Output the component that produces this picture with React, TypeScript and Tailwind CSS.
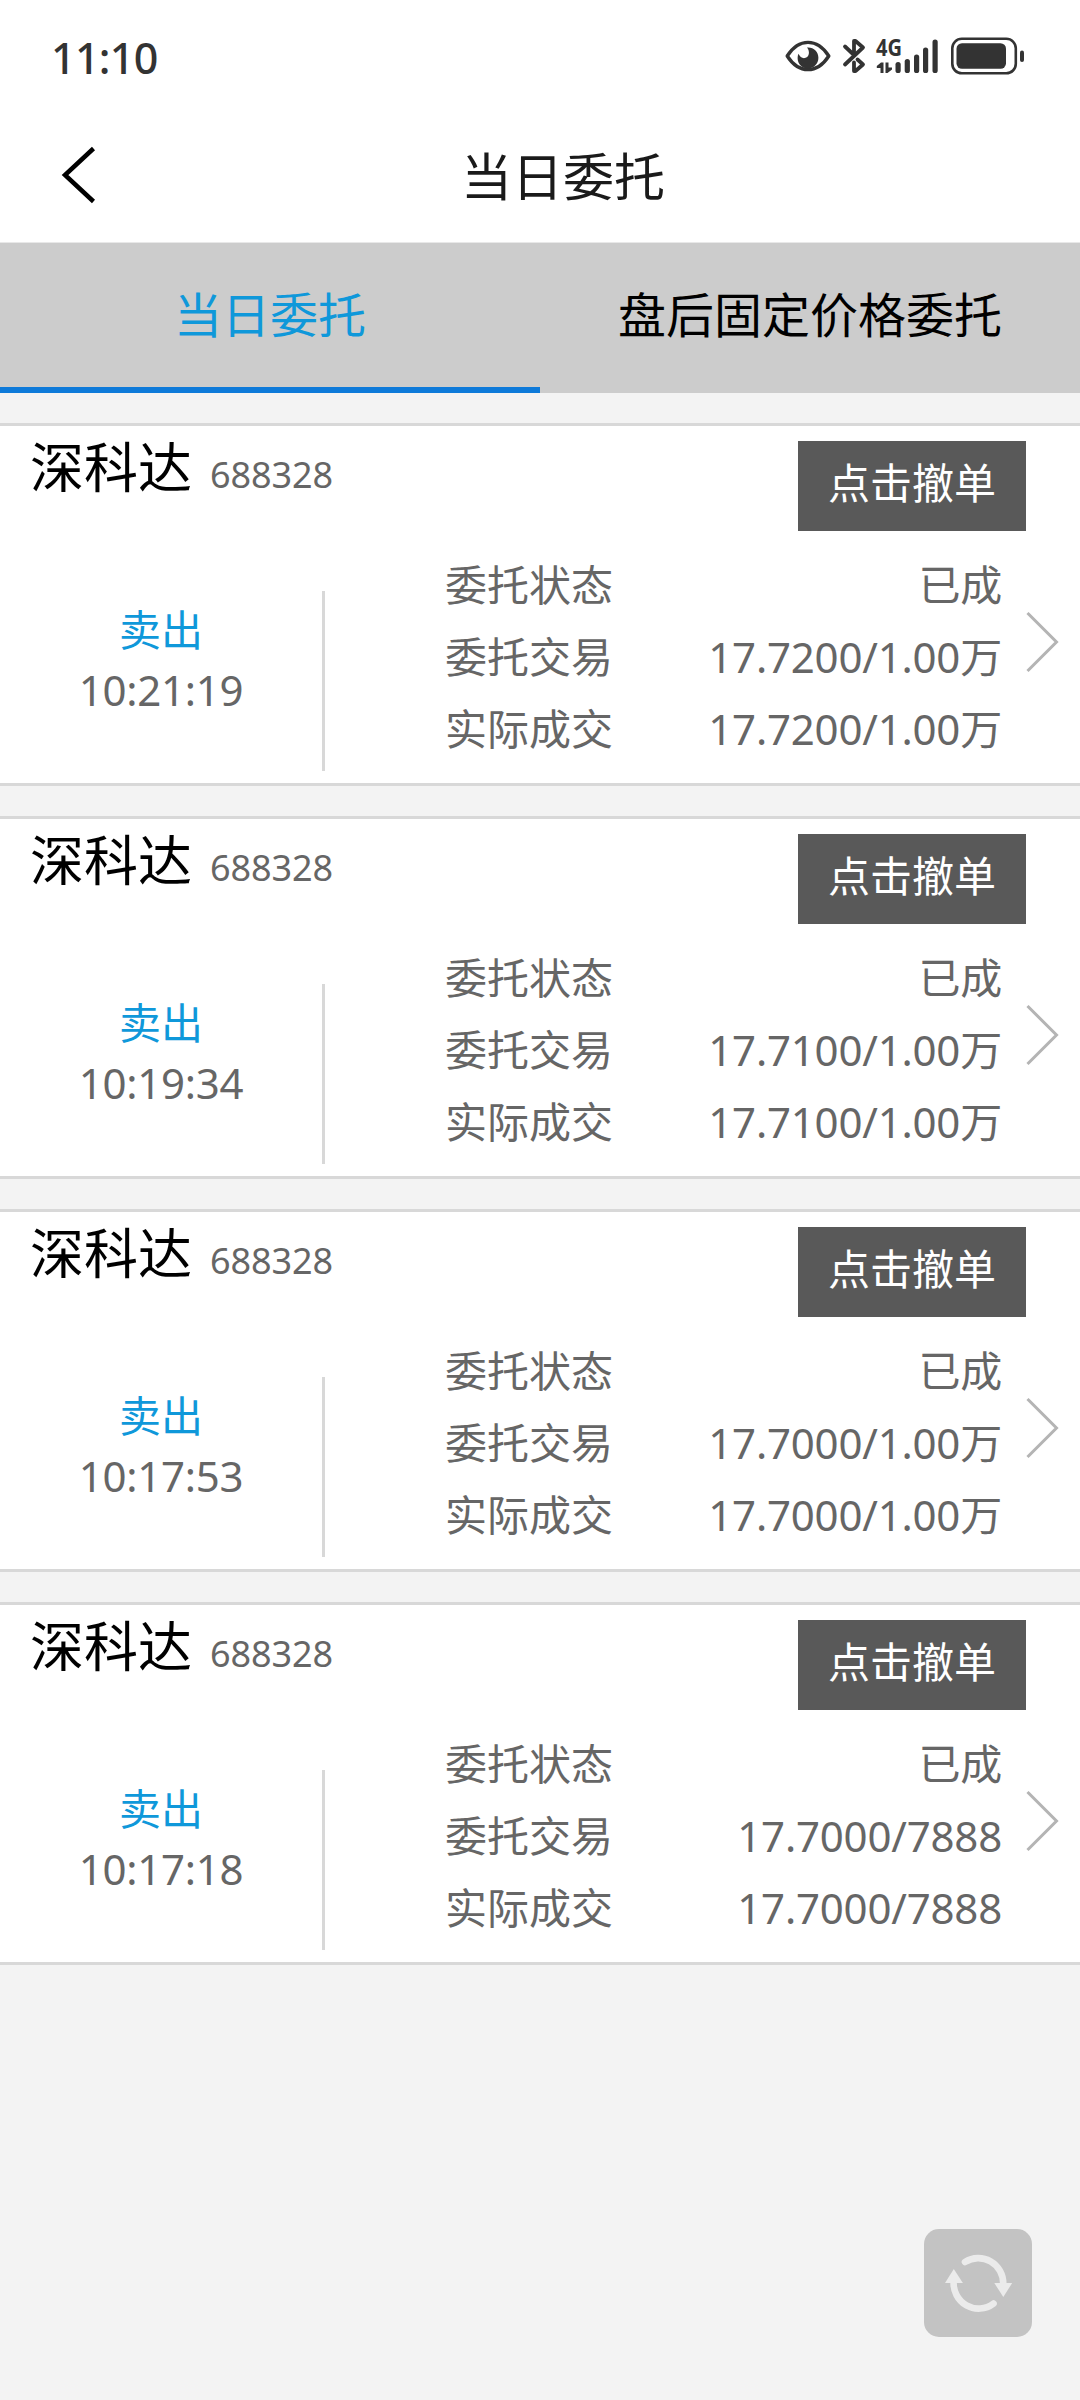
import React, { useState } from "react";

interface Order {
  name: string;
  code: string;
  side: string;
  time: string;
  status: string;
  entrust: string;
  deal: string;
}

const orders: Order[] = [
  {
    name: "深科达",
    code: "688328",
    side: "卖出",
    time: "10:21:19",
    status: "已成",
    entrust: "17.7200/1.00万",
    deal: "17.7200/1.00万",
  },
  {
    name: "深科达",
    code: "688328",
    side: "卖出",
    time: "10:19:34",
    status: "已成",
    entrust: "17.7100/1.00万",
    deal: "17.7100/1.00万",
  },
  {
    name: "深科达",
    code: "688328",
    side: "卖出",
    time: "10:17:53",
    status: "已成",
    entrust: "17.7000/1.00万",
    deal: "17.7000/1.00万",
  },
  {
    name: "深科达",
    code: "688328",
    side: "卖出",
    time: "10:17:18",
    status: "已成",
    entrust: "17.7000/7888",
    deal: "17.7000/7888",
  },
];

const tabs = ["当日委托", "盘后固定价格委托"];

function EyeIcon() {
  return (
    <svg width="46" height="32" viewBox="0 0 46 32" fill="none">
      <path
        d="M2.200 16C8 7 15 2.400 23 2.400S38 7 43.800 16C38 25 31 29.600 23 29.600S8 25 2.200 16Z"
        stroke="#333"
        strokeWidth="3.400"
        strokeLinejoin="round"
      />
      <path
        d="M22 7.600c6.600-.6 11.400 4.200 11.400 10.200 0 6-4.600 10.700-10.400 10.700S12.600 24 12.600 18c0-1.500.3-3 .9-4.200 1.300 3 3.600 4.700 6.300 4.300 4.400-.7 5.600-6.500 2.200-10.500Z"
        fill="#333"
      />
    </svg>
  );
}

function BluetoothIcon() {
  return (
    <svg
      width="24"
      height="36"
      viewBox="0 0 24 36"
      fill="none"
      stroke="#333"
      strokeWidth="3.800"
      strokeLinecap="round"
      strokeLinejoin="round"
    >
      <path d="M3 8.500L12 17V3h1.500L21 9.500 3 26.500" />
      <path d="M15.500 21.500L21 26.500 13.500 33H12v-8.500" />
    </svg>
  );
}

function SignalIcon() {
  return (
    <svg
      className="overflow-visible"
      width="64"
      height="36"
      viewBox="0 0 64 36"
      fill="#333"
    >
      <text
        x="0"
        y="18"
        fontSize="23"
        fontWeight="700"
        fontFamily="Noto Sans, sans-serif"
        textLength="26"
        lengthAdjust="spacingAndGlyphs"
      >
        4G
      </text>
      <path d="M7.500 24.500V35H4.500v-5H.8v-2L5 24.500zM9.500 24.500h3v5H16v2L11.500 35h-2z" />
      <rect x="19.500" y="24" width="5.200" height="11" rx="2.600" />
      <rect x="28.700" y="21" width="5.200" height="14" rx="2.600" />
      <rect x="38" y="16.500" width="5.200" height="18.500" rx="2.600" />
      <rect x="47" y="9.500" width="5.200" height="25.500" rx="2.600" />
      <rect x="56.500" y="1.500" width="5.200" height="33.500" rx="2.600" />
    </svg>
  );
}

function BatteryIcon() {
  return (
    <svg width="74" height="38" viewBox="0 0 74 38" fill="none">
      <rect
        x="1.300"
        y="1.800"
        width="63.500"
        height="34.500"
        rx="9.500"
        stroke="#333"
        strokeWidth="2.600"
      />
      <rect x="5.500" y="6.200" width="49.500" height="25.600" rx="5.500" fill="#333" />
      <rect x="69" y="13.500" width="4" height="11.500" rx="2" fill="#333" />
    </svg>
  );
}

function RefreshIcon() {
  return (
    <svg width="108" height="108" viewBox="0 0 108 108" fill="none">
      <g stroke="#ebebeb" strokeWidth="6.600" strokeLinecap="round">
        <path d="M41 33A25 25.500 0 0 1 79.300 55" />
        <path d="M69.500 74.600A25 25.500 0 0 1 29.700 52" />
      </g>
      <path d="M70.300 54h17.900l-8.900 14z" fill="#ebebeb" />
      <path d="M21 54h17.900L29.800 40z" fill="#ebebeb" />
    </svg>
  );
}

function OrderCard({ order }: { order: Order }) {
  const rows = [
    { label: "委托状态", value: order.status },
    { label: "委托交易", value: order.entrust },
    { label: "实际成交", value: order.deal },
  ];

  return (
    <div className="h-[363px] border-y-[3px] border-[#d8d8d8] bg-white">
      <div className="flex h-[123px] items-start justify-between pl-[30px] pr-[54px]">
        <div className="flex items-baseline gap-[18px] pt-px">
          <span className="text-[54px] leading-[80px] text-black">
            {order.name}
          </span>
          <span className="text-[36px] leading-[80px] tracking-[-0.1px] text-[#666]">
            {order.code}
          </span>
        </div>
        <button className="mt-[15px] h-[90px] w-[228px] bg-[#595959] pb-[6px] text-[42px] leading-[84px] text-white">
          点击撤单
        </button>
      </div>

      <div className="flex h-[234px]">
        <div className="mt-[42px] flex h-[180px] w-[325px] flex-col items-center border-r-[3px] border-[#d8d8d8] pt-[9px] text-[42px] leading-[60px]">
          <span className="text-[#0f98da]">{order.side}</span>
          <span className="tracking-[-0.3px] text-[#666]">{order.time}</span>
        </div>
        <div className="flex w-[677px] flex-col pl-[120px] text-[42px] leading-[72px] text-[#666]">
          {rows.map((row) => (
            <div key={row.label} className="flex justify-between">
              <span>{row.label}</span>
              <span className="tracking-[-0.2px]">{row.value}</span>
            </div>
          ))}
        </div>
        <svg
          className="ml-[23px] mt-[62px]"
          width="36"
          height="62"
          viewBox="0 0 36 62"
          fill="none"
          stroke="#b4b4b4"
          strokeWidth="3"
        >
          <path d="M2.500 2L31.500 31 2.500 60" />
        </svg>
      </div>
    </div>
  );
}

function App() {
  const [active, setActive] = useState<number>(0);

  return (
    <div className="flex h-[2400px] w-[1080px] flex-col overflow-hidden bg-[#f3f3f3] font-['Noto_Sans','Noto_Sans_CJK_SC',sans-serif]">
      <div className="flex h-[112px] shrink-0 items-center justify-between bg-white pl-[51px] pr-[55px]">
        <span className="pt-[3px] text-[43px] font-medium leading-[60px] tracking-[-0.7px] text-[#333]">
          11:10
        </span>
        <div className="flex items-center">
          <EyeIcon />
          <span className="ml-[11px]">
            <BluetoothIcon />
          </span>
          <span className="ml-[10px]">
            <SignalIcon />
          </span>
          <span className="ml-[11px]">
            <BatteryIcon />
          </span>
        </div>
      </div>

      <div className="flex h-[131px] shrink-0 items-center border-b border-[#e8e8e8] bg-white pl-[60px]">
        <svg
          className="-mt-[4px]"
          width="40"
          height="60"
          viewBox="0 0 40 60"
          fill="none"
          stroke="#000"
          strokeWidth="4.500"
        >
          <path d="M33.500 3.500L5 30 33.500 56.500" />
        </svg>
        <h1 className="-mt-[3px] ml-[361px] text-[51px] leading-[72px] text-[#1a1a1a]">
          当日委托
        </h1>
      </div>

      <div className="grid h-[150px] shrink-0 grid-cols-2 bg-[#ccc]">
        {tabs.map((tab, index) => (
          <button
            key={tab}
            onClick={() => setActive(index)}
            className={
              active === index
                ? "border-b-[6px] border-[#0e7ad9] text-[48px] leading-[144px] text-[#0f98da]"
                : "border-b-[6px] border-transparent text-[48px] leading-[144px] text-black"
            }
          >
            {tab}
          </button>
        ))}
      </div>

      <div className="flex flex-col gap-[30px] pt-[30px]">
        {orders.map((order) => (
          <OrderCard key={order.time} order={order} />
        ))}
      </div>

      <button className="mb-[63px] ml-auto mr-[48px] mt-auto h-[108px] w-[108px] rounded-[15px] bg-[#c3c3c3]">
        <RefreshIcon />
      </button>
    </div>
  );
}

export default App;
